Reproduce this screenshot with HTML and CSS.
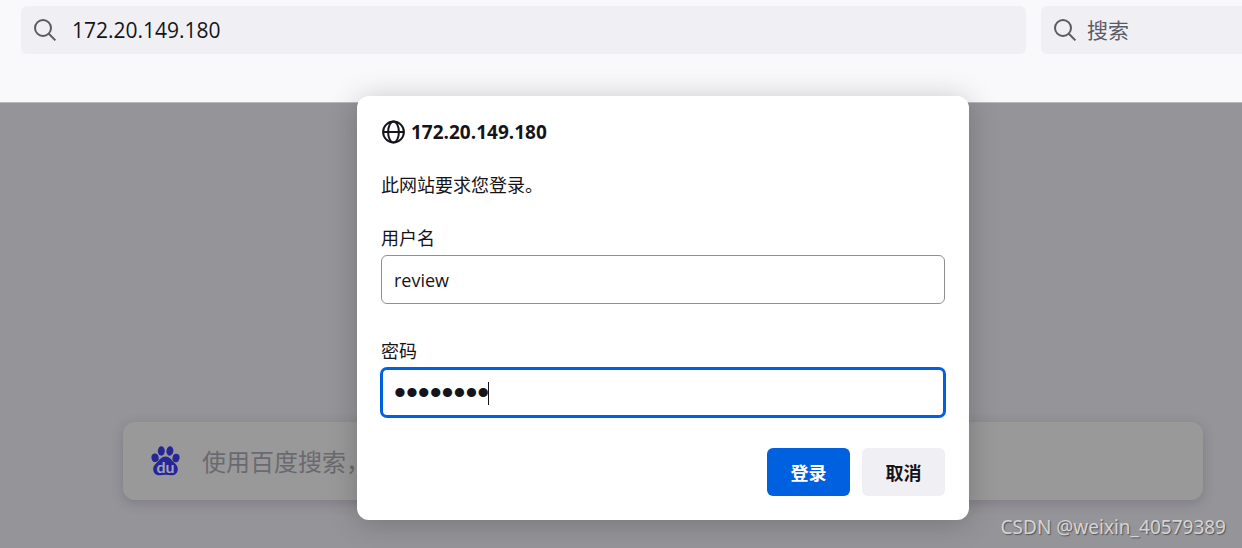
FILE: index.html
```html
<!DOCTYPE html>
<html lang="zh-CN">
<head>
  <meta charset="UTF-8">
  <meta name="viewport" content="width=device-width, initial-scale=1">
  <title>172.20.149.180</title>
  <link rel="stylesheet" href="styles.css">
</head>
<body>
  <header class="toolbar">
    <label class="bar url-bar">
      <svg class="search-icon" viewBox="0 0 24 24" aria-hidden="true">
        <circle cx="10" cy="10" r="8"/>
        <path d="M15.8 15.8L22.4 22.4"/>
      </svg>
      <input type="text" value="172.20.149.180" aria-label="地址">
    </label>
    <label class="bar search-bar">
      <svg class="search-icon" viewBox="0 0 24 24" aria-hidden="true">
        <circle cx="10" cy="10" r="8"/>
        <path d="M15.8 15.8L22.4 22.4"/>
      </svg>
      <input type="text" placeholder="搜索" aria-label="搜索">
    </label>
  </header>

  <main class="new-tab">
    <label class="baidu-search">
      <svg class="baidu-logo" viewBox="0 0 28 30" aria-hidden="true">
        <ellipse cx="3.600" cy="11.800" rx="3.600" ry="4.300" transform="rotate(-10 3.6 11.8)"/>
        <ellipse cx="9.800" cy="5" rx="3.500" ry="4.700"/>
        <ellipse cx="18.400" cy="5" rx="3.500" ry="4.700" transform="rotate(6 18.4 5)"/>
        <ellipse cx="24.500" cy="12" rx="3.500" ry="4.300" transform="rotate(10 24.5 12)"/>
        <path d="M14 10.6c4 0 5.600 3.200 8.600 6 2.800 2.600 4.200 4.800 3.600 7.800-.6 3.400-3 5-6.400 4.800-2-.1-3.800-.5-5.800-.5s-3.800.4-5.800.5c-3.400.2-5.800-1.400-6.400-4.800-.6-3 .8-5.200 3.600-7.800 3-2.800 4.600-6 8.600-6z"/>
        <text x="14" y="26.500" text-anchor="middle">du</text>
      </svg>
      <input type="text" placeholder="使用百度搜索，" aria-label="百度搜索">
    </label>
  </main>

  <form class="dialog" role="dialog" aria-labelledby="dialog-title">
    <h1 id="dialog-title">
      <svg class="globe" viewBox="0 0 24 24" aria-hidden="true">
        <circle cx="12.500" cy="12" r="10.400"/>
        <ellipse cx="12.500" cy="12" rx="5.400" ry="10.400"/>
        <path d="M2 12h21"/>
      </svg>
      172.20.149.180
    </h1>
    <p>此网站要求您登录。</p>
    <div class="field">
      <label for="username">用户名</label>
      <input type="text" id="username" value="review">
    </div>
    <div class="field">
      <label for="password">密码</label>
      <div class="password-box">
        <input type="password" id="password" value="password">
        <span class="caret"></span>
      </div>
    </div>
    <div class="buttons">
      <button type="button" class="primary">登录</button>
      <button type="button">取消</button>
    </div>
  </form>

  <div class="watermark">CSDN @weixin_40579389</div>
</body>
</html>
```
FILE: styles.css
```css
* {
  box-sizing: border-box;
}
body {
  position: relative;
  display: flex;
  flex-direction: column;
  min-height: 100vh;
  margin: 0;
  font-family: 'Open Sans', 'Noto Sans CJK SC', sans-serif;
  font-size: 18px;
  color: #15141a;
  background: #959499;
}
input, button {
  font: inherit;
  color: inherit;
}

/* Browser toolbar */
.toolbar {
  display: flex;
  gap: 15px;
  padding: 6px 0 48px 21px;
  background: #f9f9fb;
  border-bottom: 1px solid #b9b9bc;
}
.bar {
  display: flex;
  align-items: center;
  height: 48px;
  padding-left: 12px;
  background: #f0f0f4;
  border-radius: 6px;
  font-size: 21px;
}
.bar input {
  flex: 1;
  min-width: 0;
  padding: 0;
  border: none;
  outline: none;
  background: none;
}
.bar input::placeholder {
  color: #5b5b66;
  opacity: 1;
}
.url-bar {
  flex: 1;
  gap: 15px;
}
.search-bar {
  width: 201px;
  gap: 10px;
  border-radius: 6px 0 0 6px;
}
.search-icon {
  width: 24px;
  height: 24px;
  fill: none;
  stroke: #5b5b60;
  stroke-width: 2;
}

/* New tab page, dimmed */
.new-tab {
  flex: 1;
  display: flex;
  align-items: flex-end;
  padding: 48px 39px 48px 123px;
}
.baidu-search {
  flex: 1;
  display: flex;
  align-items: center;
  gap: 22px;
  height: 78px;
  padding: 0 28px;
  background: #999;
  border-radius: 12px;
  box-shadow: 0 3px 12px rgba(58, 57, 68, 0.25);
}
.baidu-search input {
  flex: 1;
  min-width: 0;
  padding: 0;
  border: none;
  outline: none;
  background: none;
  font-size: 24px;
}
.baidu-search input::placeholder {
  color: #6b6970;
  opacity: 1;
}
.baidu-logo {
  width: 29px;
  height: 30px;
  fill: #262699;
}
.baidu-logo text {
  fill: #a3a3b5;
  font-family: Lato, sans-serif;
  font-size: 16px;
  font-weight: bold;
}

/* Login dialog */
.dialog {
  position: absolute;
  top: 96px;
  left: 357px;
  width: 612px;
  padding: 24px;
  background: #fff;
  border-radius: 12px;
  box-shadow: 0 3px 30px rgba(0, 0, 0, 0.22);
}
.dialog h1 {
  display: flex;
  align-items: center;
  gap: 6px;
  margin: 0 0 28px;
  font-size: 19px;
  line-height: 24px;
}
.globe {
  width: 24px;
  height: 24px;
  fill: none;
  stroke: #15141a;
  stroke-width: 2;
}
.dialog p {
  margin: 0 0 27px;
  line-height: 26px;
}
.field {
  margin-bottom: 34px;
}
.field label {
  display: block;
  margin-bottom: 4px;
  line-height: 26px;
}
.field input {
  display: block;
  width: 100%;
  height: 49px;
  padding: 0 12px;
  border: 1px solid #8f8f94;
  border-radius: 6px;
  outline: none;
  background: #fff;
}
.password-box {
  position: relative;
}
.password-box input {
  border-color: #0061e0;
  outline: 3px solid #0061e0;
  outline-offset: -2px;
  font-family: 'Liberation Sans', sans-serif;
  font-size: 34px;
}
.caret {
  position: absolute;
  top: 14px;
  left: 107px;
  width: 1px;
  height: 23px;
  background: #15141a;
}
.buttons {
  display: flex;
  justify-content: flex-end;
  gap: 12px;
  margin-top: -3px;
}
.buttons button {
  width: 83px;
  height: 48px;
  padding: 0;
  border: none;
  border-radius: 6px;
  background: #f0f0f4;
  font-weight: bold;
  cursor: pointer;
}
.buttons .primary {
  background: #0061e0;
  color: #fff;
}

.watermark {
  position: absolute;
  right: 16px;
  bottom: 8px;
  font-family: 'Noto Sans', sans-serif;
  font-size: 19px;
  line-height: 26px;
  color: #d4d4d6;
  text-shadow: 1px 1px 1px #555;
}
```
